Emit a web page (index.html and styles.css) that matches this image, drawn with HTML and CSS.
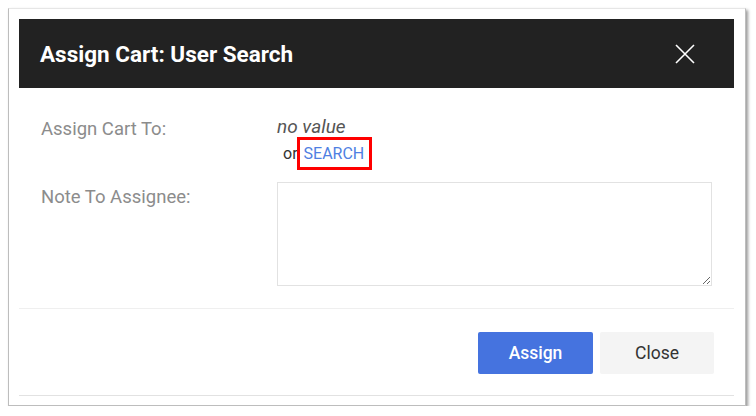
FILE: index.html
```html
<!DOCTYPE html>
<html>
<head>
<meta charset="utf-8">
<link rel="stylesheet" href="styles.css">
</head>
<body>
<div class="frame">
  <div class="dialog">
    <div class="header">
      <h1 class="title">Assign Cart: User Search</h1>
      <button class="close-x" aria-label="Close">
        <svg width="20" height="20" viewBox="0 0 20 20"><path d="M1 1 L19 19 M19 1 L1 19" stroke="#fff" stroke-width="1.6" fill="none"/></svg>
      </button>
    </div>
    <div class="body">
      <div class="row row-assign">
        <div class="label">Assign Cart To:</div>
        <div class="value">
          <div class="novalue">no value</div>
          <div class="orline"><span class="or">or</span><span class="search-box"><a class="search">SEARCH</a></span></div>
        </div>
      </div>
      <div class="row row-note">
        <div class="label">Note To Assignee:</div>
        <div class="value">
          <textarea class="note"></textarea>
        </div>
      </div>
    </div>
    <div class="footer">
      <button class="btn btn-primary">Assign</button>
      <button class="btn btn-default">Close</button>
    </div>
  </div>
</div>
</body>
</html>
```

FILE: styles.css
```css
* { box-sizing: border-box; }
html, body { margin: 0; padding: 0; background: #fff; }
body { font-family: Roboto, "Liberation Sans", sans-serif; }

.frame {
  margin: 8px 0 0 8px;
  width: 738px;
  height: 398px;
  border: 1px solid #bdbdbd;
  border-top-color: #e6e6e6;
  box-shadow: 2px 2px 3px rgba(0,0,0,0.4);
  padding: 10px 10px 0 10px;
  background: #fff;
}

.dialog {
  width: 715px;
  height: 377px;
  border-bottom: 1px solid #e2e2e2;
  display: flex;
  flex-direction: column;
}

.header {
  height: 69px;
  flex: none;
  background: #222;
  display: flex;
  align-items: center;
  justify-content: space-between;
  padding: 0 39px 0 21px;
}
.title {
  margin: 0;
  color: #fff;
  font-size: 22.5px;
  font-weight: 700;
  line-height: 26px;
}
.close-x {
  background: none;
  border: 0;
  padding: 0;
  width: 20px;
  height: 20px;
  display: flex;
  margin-top: 1px;
}

.body {
  flex: none;
  padding: 29px 22px 0 22px;
  height: 221px;
  border-bottom: 1px solid #efefef;
}
.row { display: flex; }
.label {
  width: 236px;
  color: #8c8c8c;
  font-size: 18.5px;
  line-height: 22px;
  padding-top: 1px;
}
.value { flex: 1; }
.novalue {
  color: #555;
  font-style: italic;
  font-size: 19px;
  line-height: 20px;
}
.orline {
  display: flex;
  align-items: center;
  padding-left: 6px;
}
.or { color: #333; font-size: 16px; }
.search-box {
  border: 3px solid #ff0000;
  padding: 4px 5px 4px 4px;
  margin-left: -1px;
}
.search {
  color: #4f7fe2;
  font-size: 16px;
  line-height: 19px;
  display: block;
}
.row-note { margin-top: 12px; }
.row-note .label { padding-top: 4px; }
.note {
  display: block;
  width: 435px;
  height: 104px;
  border: 1px solid #e2e2e2;
  resize: vertical;
  margin: 0;
  font-family: Roboto, "Liberation Sans", sans-serif;
}

.footer {
  flex: 1;
  display: flex;
  justify-content: flex-end;
  align-items: flex-start;
  gap: 7px;
  padding: 23px 20px 0 0;
}
.btn {
  height: 42px;
  width: 115px;
  border: 0;
  border-radius: 2px;
  font-family: Roboto, "Liberation Sans", sans-serif;
  font-size: 17.5px;
}
.btn-primary {
  background: #4573df;
  color: #fff;
  font-weight: 500;
}
.btn-default {
  background: #f4f4f4;
  color: #333;
  width: 114px;
}
```
